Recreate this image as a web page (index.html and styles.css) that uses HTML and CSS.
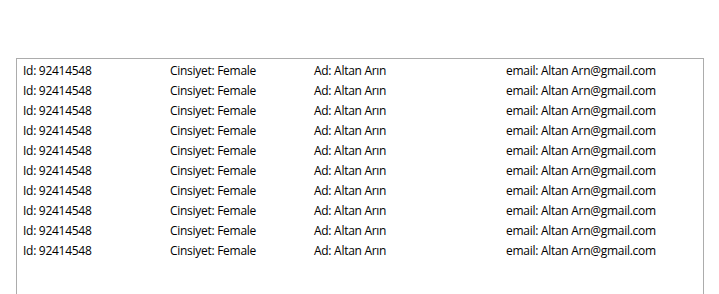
FILE: index.html
```html
<!DOCTYPE html>
<html lang="en">
  <head>
    <meta charset="UTF-8" />
    <meta name="viewport" content="width=device-width, initial-scale=1.0" />
    <title>Kullanicilar</title>
    <link rel="stylesheet" href="styles.css">
  </head>
  <body>
    <div class="list" id="list"></div>
    <script>
      let list = document.getElementById("list");

      for (let index = 0; index < 10; index++) {
        let row = document.createElement("div");
        row.className = "row";
        row.innerHTML =
          "<span>Id: 92414548</span>" +
          "<span>Cinsiyet: Female</span>" +
          "<span>Ad: Altan Arın</span>" +
          "<span>email: Altan Arn@gmail.com</span>";
        list.appendChild(row);
      }
    </script>
  </body>
</html>
```

FILE: styles.css
```css
body {
  margin: 0;
  padding: 58px 0 0 16px;
  background-color: #ffffff;
  font-family: "Open Sans", "Noto Sans", sans-serif;
  font-size: 12px;
  letter-spacing: -0.28px;
  color: #000000;
}

/* list box runs on below the window, so no bottom edge */
.list {
  box-sizing: border-box;
  width: 688px;
  height: 236px;
  border: 1px solid #acacac;
  border-bottom: none;
  padding-top: 2px;
  overflow: hidden;
}

.row {
  display: grid;
  grid-template-columns: 147px 144px 192px auto;
  padding-left: 6px;
  height: 20px;
  line-height: 20px;
  white-space: nowrap;
}
```
